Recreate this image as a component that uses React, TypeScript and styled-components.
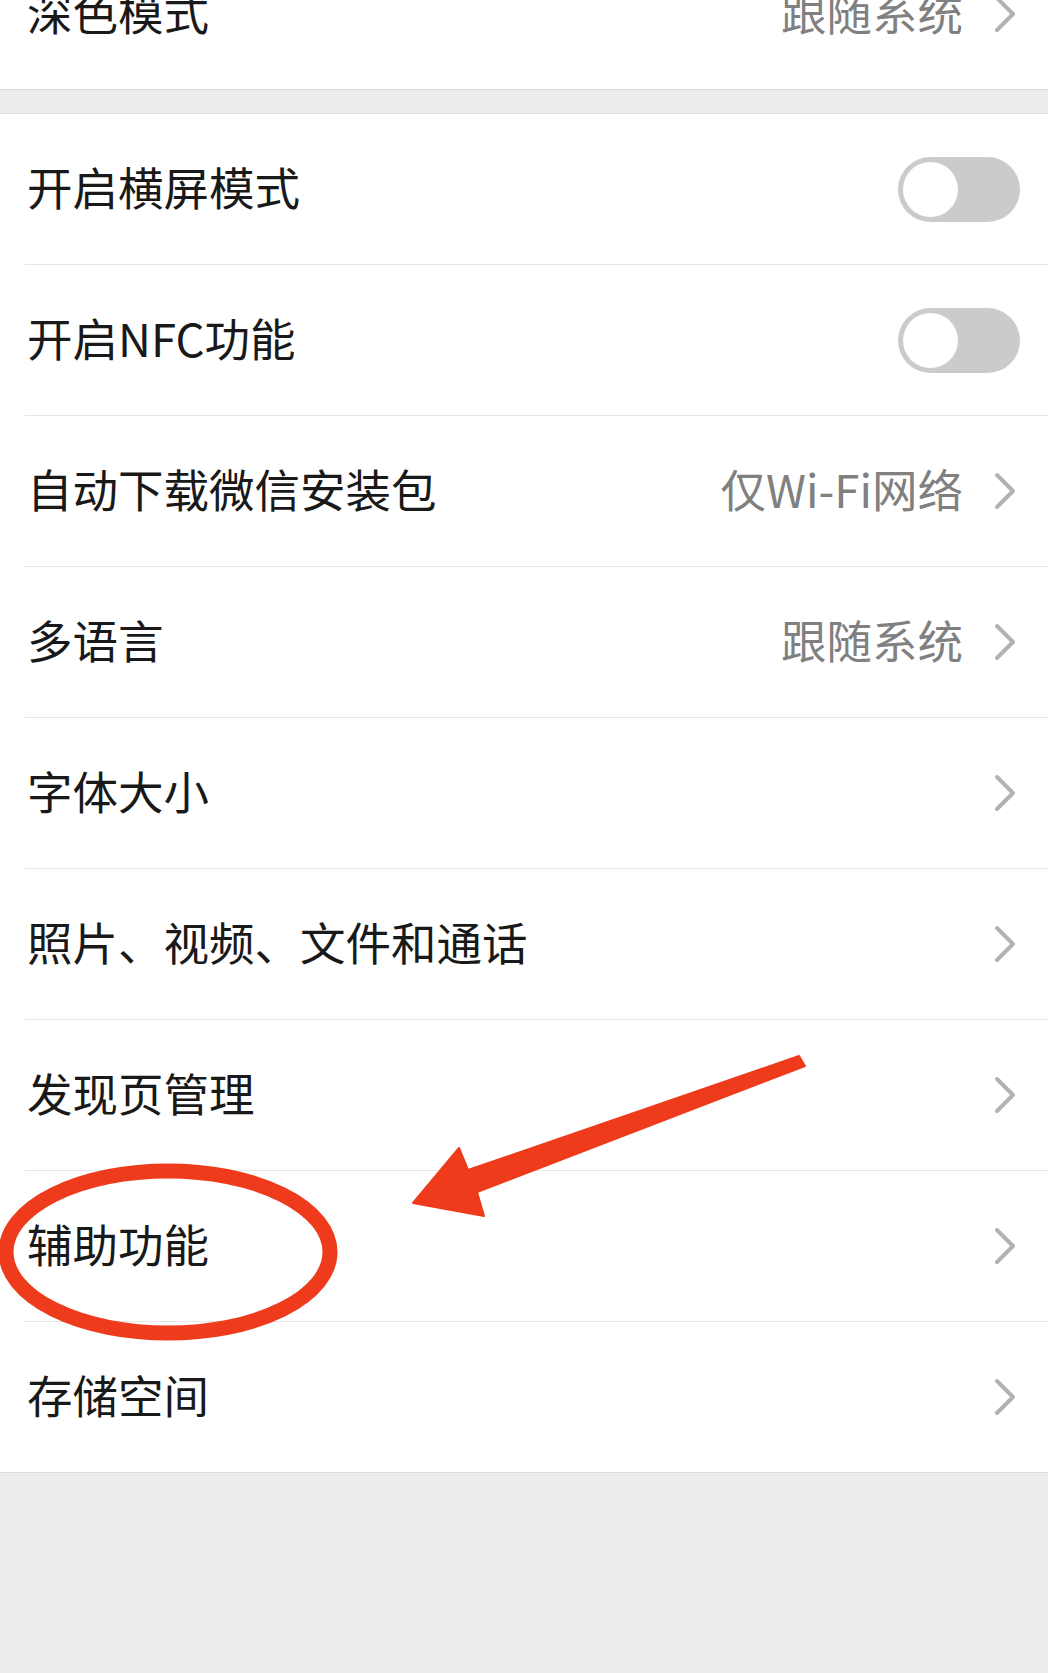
import React from 'react'
import styled, { createGlobalStyle } from 'styled-components'

const GlobalStyle = createGlobalStyle`
    html, body {
        margin: 0;
        padding: 0;
        background: #ededed;
    }
    body {
        font-family: "Noto Sans CJK SC", "Noto Sans", sans-serif;
        -webkit-font-smoothing: antialiased;
    }
`

const Screen = styled.div`
    position: relative;
    width: 1048px;
    height: 1673px;
    overflow: hidden;
    background: #ededed;
`

// the list is scrolled: the first row is cut off at the top
const Scroller = styled.div`
    display: flex;
    flex-direction: column;
    gap: 23px;
    margin-top: -61px;
`

const Section = styled.div`
    display: flex;
    flex-direction: column;
    background: #ffffff;
    padding-left: 25px;
    border-top: ${({ $top }: { $top?: boolean }) => ($top ? '1px solid #dcdcdc' : 'none')};
    border-bottom: 1px solid #dcdcdc;
`

const Row = styled.div`
    display: flex;
    flex-direction: row;
    align-items: center;
    height: 150px;
    padding: 0 28px 0 2px;
    box-sizing: content-box;
    & + & {
        border-top: 1px solid #e5e5e5;
    }
`

const Label = styled.div`
    flex: 1;
    font-size: 45.5px;
    color: #191919;
    line-height: 1;
    padding-bottom: 4px;
    white-space: nowrap;
`

const Value = styled.div`
    font-size: 45.5px;
    color: #808080;
    line-height: 1;
    padding-bottom: 4px;
    margin-right: 30px;
    white-space: nowrap;
`

const Chevron = styled.svg`
    width: 24px;
    height: 38px;
    flex: none;
    margin-right: 3px;
`

const Track = styled.div`
    position: relative;
    width: 122px;
    height: 65px;
    border-radius: 33px;
    background: #cbcbcb;
    flex: none;
`

const Knob = styled.div`
    position: absolute;
    left: 5px;
    top: 5px;
    width: 55px;
    height: 55px;
    border-radius: 50%;
    background: #ffffff;
`

const Overlay = styled.svg`
    position: absolute;
    left: 0;
    top: 0;
    width: 1048px;
    height: 1673px;
    pointer-events: none;
`

const Arrow = () => (
    <Chevron viewBox="0 0 24 38">
        <path d="M4 3 L20 19 L4 35" fill="none" stroke="#b2b2b2" strokeWidth="4" strokeLinecap="round" strokeLinejoin="round" />
    </Chevron>
)

const Switch = () => (
    <Track>
        <Knob />
    </Track>
)

type Item = { label: string; value?: string; toggle?: boolean }

const items: Item[] = [
    { label: '开启横屏模式', toggle: true },
    { label: '开启NFC功能', toggle: true },
    { label: '自动下载微信安装包', value: '仅Wi-Fi网络' },
    { label: '多语言', value: '跟随系统' },
    { label: '字体大小' },
    { label: '照片、视频、文件和通话' },
    { label: '发现页管理' },
    { label: '辅助功能' },
    { label: '存储空间' }
]

const SettingRow = ({ label, value, toggle }: Item) => (
    <Row>
        <Label>{label}</Label>
        {value && <Value>{value}</Value>}
        {toggle ? <Switch /> : <Arrow />}
    </Row>
)

export default function App() {
    return (
        <Screen>
            <GlobalStyle />
            <Scroller>
                <Section>
                    <SettingRow label="深色模式" value="跟随系统" />
                </Section>
                <Section $top>
                    {items.map((item) => (
                        <SettingRow key={item.label} {...item} />
                    ))}
                </Section>
            </Scroller>
            <Overlay viewBox="0 0 1048 1673">
                <ellipse cx="168" cy="1252" rx="162" ry="81" fill="none" stroke="#ee3b1c" strokeWidth="15" />
                <polygon
                    points="799,1056 805,1066 477,1192 484,1216 413,1203 459,1148 468,1170"
                    fill="#ee3b1c"
                    stroke="#ee3b1c"
                    strokeWidth="2"
                    strokeLinejoin="round"
                />
            </Overlay>
        </Screen>
    )
}
